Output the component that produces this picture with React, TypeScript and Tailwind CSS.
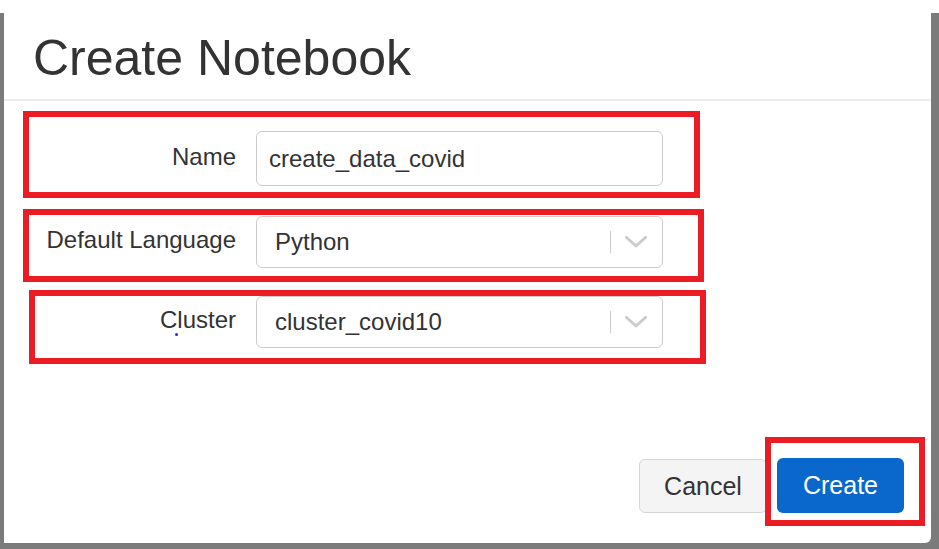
import React from "react";

const Chevron = () => (
  <svg width="22" height="12" viewBox="0 0 22 12" fill="none">
    <path d="M1.5 1.5 L11 10 L20.5 1.5" stroke="#cccccc" strokeWidth="3" strokeLinecap="round" strokeLinejoin="round" />
  </svg>
);

const SelectBox = ({ value }: { value: string }) => (
  <div className="w-[407px] h-[52px] border border-[#cccccc] rounded-[6px] bg-white flex items-center pl-[18px]">
    <span className="flex-1 text-[24px] text-[#333333] leading-none">{value}</span>
    <div className="w-px h-[22px] bg-[#cccccc]"></div>
    <div className="ml-[14px] mr-[15px] flex items-center">
      <Chevron />
    </div>
  </div>
);

const Field = ({
  label,
  boxClass,
  labelClass,
  children,
}: {
  label: React.ReactNode;
  boxClass: string;
  labelClass: string;
  children: React.ReactNode;
}) => (
  <div className={boxClass}>
    <div className="flex items-center gap-5">
      <div className={labelClass}>{label}</div>
      {children}
    </div>
  </div>
);

export default function App() {
  return (
    <div className="w-[939px] h-[549px] overflow-hidden flex flex-col bg-[#7b7b7b] font-['Liberation_Sans',Arial,sans-serif]">
      <div className="h-[543px] flex pl-[4px] pr-[8px] bg-[linear-gradient(to_bottom,#ffffff_13px,#7b7b7b_13px)]">
        <div className="flex-1 bg-white rounded-br-[6px] flex flex-col">
          {/* header */}
          <div className="pt-[33px] pb-[16px] pl-[29px] border-b-2 border-[#ececec]">
            <h1 className="text-[50px] leading-none text-[#333333]">Create Notebook</h1>
          </div>

          {/* form */}
          <Field
            label="Name"
            boxClass="ml-[19px] mt-[10px] w-[677px] h-[87px] border-[6px] border-[#ec1c24] pt-[14px]"
            labelClass="w-[207px] text-right text-[24px] leading-none text-[#333333] pb-1"
          >
            <div className="w-[407px] h-[55px] border border-[#cccccc] rounded-[6px] bg-white flex items-center pl-[12px] text-[24px] leading-none text-[#333333]">
              create_data_covid
            </div>
          </Field>

          <Field
            label="Default Language"
            boxClass="ml-[19px] mt-[11px] w-[681px] h-[73px] border-[6px] border-[#ec1c24] pt-[1px]"
            labelClass="w-[207px] text-right text-[24px] leading-none text-[#333333] pb-1"
          >
            <SelectBox value="Python" />
          </Field>

          <Field
            label={
              <span className="relative">
                Cluster
                <span className="absolute left-[15px] top-[27px] w-[3px] h-[3px] rounded-full bg-[#2a2ae0]"></span>
              </span>
            }
            boxClass="ml-[25px] mt-[8px] w-[677px] h-[74px] border-[6px] border-[#ec1c24]"
            labelClass="w-[201px] text-right text-[24px] leading-none text-[#333333] pb-1"
          >
            <SelectBox value="cluster_covid10" />
          </Field>

          {/* footer */}
          <div className="mt-[73px] flex justify-end items-start pr-[6px]">
            <button className="mt-[22px] w-[128px] h-[54px] -mr-[2px] border border-[#d6d6d6] rounded-[6px] bg-[#f4f4f4] text-[25px] leading-none text-[#333333]">
              Cancel
            </button>
            <div className="relative w-[160px] h-[89px] border-[6px] border-[#ec1c24] pt-[15px] pl-[6px]">
              <button className="w-[127px] h-[55px] rounded-[6px] bg-[#0a67cc] text-[25px] leading-none text-white">
                Create
              </button>
            </div>
          </div>
        </div>
      </div>
      <div className="flex-1"></div>
    </div>
  );
}
